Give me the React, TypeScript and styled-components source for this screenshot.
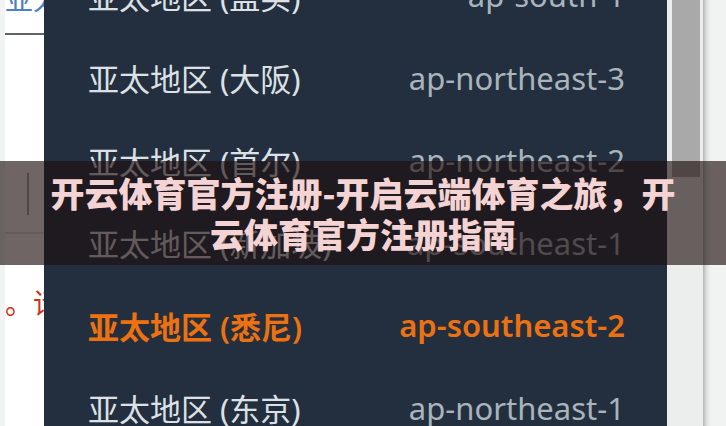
import React from 'react';
import styled, { createGlobalStyle } from 'styled-components';

const GlobalStyle = createGlobalStyle`
  html, body {
    margin: 0;
    padding: 0;
    background: #f2f3f3;
    overflow: hidden;
  }
`;

const Page = styled.div`
  position: relative;
  display: flex;
  width: 726px;
  height: 426px;
  overflow: hidden;
  background: #f2f3f3;
  font-family: 'Noto Sans', 'Noto Sans CJK SC', sans-serif;
`;

const Gutter = styled.div`
  flex: none;
  width: 5px;
  background: #f2f3f3;
`;

const SidePane = styled.div`
  flex: none;
  width: 39px;
  display: flex;
  flex-direction: column;
  overflow: hidden;
  background: #ffffff;
  font-family: 'Noto Sans CJK SC', sans-serif;
`;

const CutLink = styled.span`
  margin-top: -16px;
  font-size: 28px;
  line-height: 28px;
  color: #4f7fc6;
  white-space: nowrap;
`;

const Rule = styled.div<{ $gap: number; $color: string }>`
  flex: none;
  height: 2px;
  margin-top: ${(p) => p.$gap}px;
  background: ${(p) => p.$color};
`;

const Caret = styled.div`
  flex: none;
  width: 2px;
  height: 42px;
  margin: 138px 0 0 22px;
  background: #a9a9a9;
`;

const Hint = styled.span`
  margin-top: 53px;
  font-size: 28px;
  line-height: 30px;
  color: #d13212;
  white-space: nowrap;
`;

const Menu = styled.div`
  flex: none;
  width: 623px;
  overflow: hidden;
  background: #232f3e;
`;

const MenuList = styled.ul`
  margin: -46px 0 0;
  padding: 0;
  list-style: none;
`;

const Option = styled.li<{ $selected?: boolean }>`
  height: 82.5px;
  display: flex;
  align-items: center;
  justify-content: space-between;
  padding: 0 42px 0 44px;
  font-size: 31px;
  font-weight: ${(p) => (p.$selected ? 600 : 400)};
  white-space: nowrap;
`;

const RegionName = styled.span<{ $selected?: boolean }>`
  color: ${(p) => (p.$selected ? '#ec7211' : '#dde1e5')};
`;

const RegionCode = styled.span<{ $selected?: boolean }>`
  color: ${(p) => (p.$selected ? '#ec7211' : '#a9b4bc')};
`;

const ScrollTrack = styled.div`
  flex: none;
  width: 31px;
  padding: 0 0 0 5px;
  background: #eceeee;
`;

const ScrollThumb = styled.div`
  width: 28px;
  height: 177px;
  background: #a9a9a9;
`;

const RightPane = styled.div`
  flex: 1;
  background: linear-gradient(to right, #b4b7b7 0, #e2e4e4 4px, #f1f2f2 8px);
`;

const Banner = styled.div`
  position: absolute;
  top: 161px;
  left: 0;
  right: 0;
  height: 104px;
  display: flex;
  flex-direction: column;
  align-items: center;
  justify-content: center;
  background: rgba(30, 14, 14, 0.64);
  color: #f3d3d3;
  font-family: 'Noto Sans CJK SC', sans-serif;
  font-size: 34px;
  font-weight: 900;
  line-height: 41px;
  text-align: center;
`;

const BannerLine = styled.span`
  white-space: nowrap;
`;

const regions = [
  { name: '亚太地区 (孟买)', code: 'ap-south-1' },
  { name: '亚太地区 (大阪)', code: 'ap-northeast-3' },
  { name: '亚太地区 (首尔)', code: 'ap-northeast-2' },
  { name: '亚太地区 (新加坡)', code: 'ap-southeast-1' },
  { name: '亚太地区 (悉尼)', code: 'ap-southeast-2', selected: true },
  { name: '亚太地区 (东京)', code: 'ap-northeast-1' },
];

const App = () => {
  return (
    <>
      <GlobalStyle />
      <Page>
        <Gutter />
        <SidePane>
          <CutLink>亚太</CutLink>
          <Rule $gap={21} $color="#5f6368" />
          <Caret />
          <Rule $gap={17} $color="#e4e4e4" />
          <Hint>。请</Hint>
        </SidePane>
        <Menu>
          <MenuList>
            {regions.map((r) => (
              <Option key={r.code} $selected={r.selected}>
                <RegionName $selected={r.selected}>{r.name}</RegionName>
                <RegionCode $selected={r.selected}>{r.code}</RegionCode>
              </Option>
            ))}
          </MenuList>
        </Menu>
        <ScrollTrack>
          <ScrollThumb />
        </ScrollTrack>
        <RightPane />
        <Banner>
          <BannerLine>开云体育官方注册-开启云端体育之旅，开</BannerLine>
          <BannerLine>云体育官方注册指南</BannerLine>
        </Banner>
      </Page>
    </>
  );
};

export default App;
